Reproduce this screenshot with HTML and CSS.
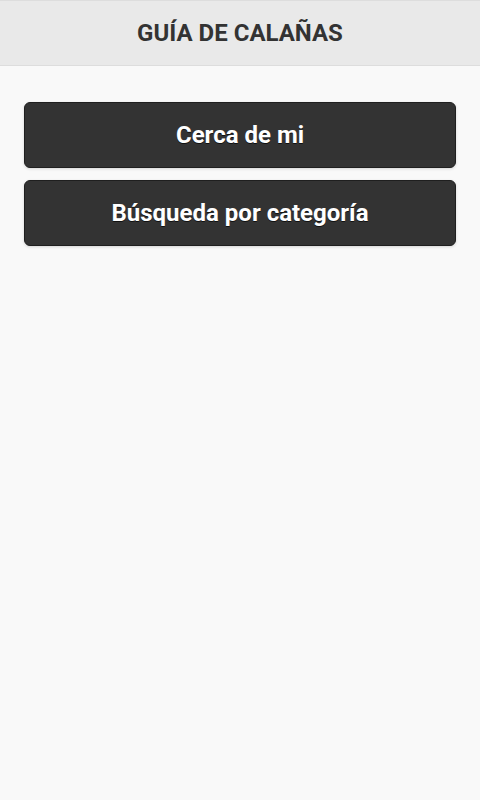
FILE: index.html
```html
<!DOCTYPE html>
<html lang="es">
<head>
    <meta charset="UTF-8">
    <meta name="viewport" content="width=device-width, initial-scale=1.0">
    <title>Guía de Calañas</title>
    <link rel="stylesheet" href="styles.css">
</head>
<body>
    <div class="page">
        <div class="header">
            <h1>GUÍA DE CALAÑAS</h1>
        </div>
        <div class="content">
            <a href="#" class="btn">Cerca de mi</a>
            <a href="#" class="btn">Búsqueda por categoría</a>
        </div>
    </div>
</body>
</html>
```

FILE: styles.css
```css
body {
    margin: 0;
    font-family: Roboto, "Liberation Sans", sans-serif;
    background: #f9f9f9;
}
.page {
    min-height: 800px;
    background: #f9f9f9;
}
.header {
    background: #e9e9e9;
    border-top: 1px solid #dddddd;
    border-bottom: 1px solid #dddddd;
    height: 64px;
    display: flex;
    align-items: center;
    justify-content: center;
}
.header h1 {
    margin: 0;
    font-size: 24px;
    font-weight: bold;
    color: #333333;
}
.content {
    padding: 36px 24px;
    display: flex;
    flex-direction: column;
    gap: 12px;
}
.btn {
    display: flex;
    align-items: center;
    justify-content: center;
    height: 64px;
    background: #333333;
    border: 1px solid #1f1f1f;
    border-radius: 6px;
    box-shadow: 0 1px 3px rgba(0, 0, 0, 0.15);
    color: #ffffff;
    font-size: 24px;
    font-weight: bold;
    text-decoration: none;
    text-shadow: 0 1px 0 #111111;
}
```
